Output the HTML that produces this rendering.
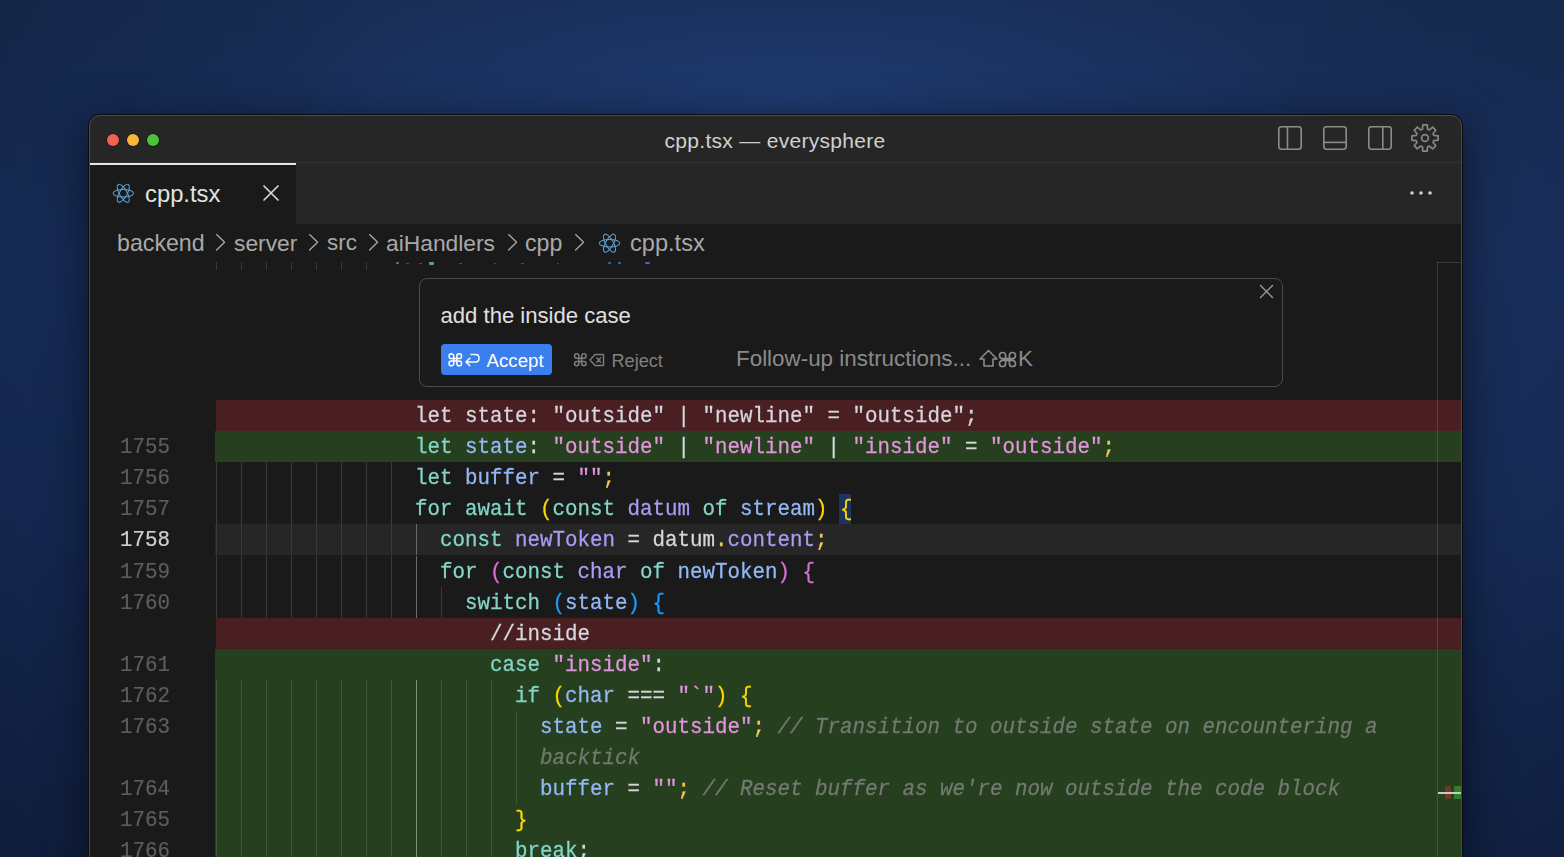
<!DOCTYPE html>
<html><head><meta charset="utf-8">
<style>
*{margin:0;padding:0;box-sizing:border-box}
html,body{width:1564px;height:857px;overflow:hidden}
body{position:relative;font-family:"Liberation Sans",sans-serif;background:#152a52;}
#bg{position:absolute;left:0;top:0;width:1564px;height:857px;
background:
 radial-gradient(ellipse 520px 160px at 790px 95px, rgba(34,66,128,0.55) 0%, rgba(34,66,128,0) 100%),
 linear-gradient(to right, rgba(5,10,25,0.22) 0%, rgba(5,10,25,0) 25%, rgba(5,10,25,0) 75%, rgba(5,10,25,0.12) 100%),
 linear-gradient(to bottom, #182d55 0%, #1a3262 30%, #182e5c 60%, #122245 100%);}
.a{position:absolute}
#win{position:absolute;left:89px;top:115px;width:1373px;height:800px;border-radius:11px;background:#1a1a1a;overflow:hidden;
 box-shadow:0 0 0 1px #0a0c12, 0 10px 45px rgba(0,0,0,.55)}
#winb{position:absolute;left:89px;top:115px;width:1373px;height:800px;border-radius:11px;border:1px solid #4a4a4a;pointer-events:none}
#title{left:0;top:0;width:1373px;height:48px;background:#262626;border-bottom:1px solid #333}
.tl{position:absolute;top:18.75px;width:12.5px;height:12.5px;border-radius:50%;box-shadow:0 0 0 0.6px rgba(0,0,0,.5)}
#ttext{left:575px;top:13px;font-size:21.7px;color:#d0d0d0;white-space:nowrap}
#tabs{left:0;top:48px;width:1373px;height:61px;background:#262626}
#tab{left:0;top:0;width:206.5px;height:61px;background:#1a1a1a;border-top:2px solid #e6e6e6}
.sans{white-space:nowrap}
.code{font-family:"Liberation Mono",monospace;font-size:20.83px;white-space:pre;line-height:31.1px}
.row{position:absolute;left:126px;width:1247px;height:31.1px}
.rdel{background:#4a1f22;clip-path:inset(0 0 0 1px)}
.radd{background:#263f1f}
.rcur{background:#262626}
.txt{position:absolute;top:1px;-webkit-text-stroke:0.25px currentColor;transform:scaleY(1.09);transform-origin:0 21px}
.ln{position:absolute;left:-95px;width:50px;text-align:right;top:1px;transform:scaleY(1.1);transform-origin:0 21px;color:#5d5d5d;-webkit-text-stroke:0.2px currentColor}
.lncur{color:#d0d0d0}
.g{position:absolute;top:0;width:1px;height:31.1px;background:#3a3a3a}
.radd .g{background:#3f5a37}
.gb{background:#6a6a6a}
.radd .gb{background:#7d9474}
.k{color:#83d6c5}.v{color:#94b8f5}.p{color:#aa9bf5}.s{color:#e394dc}.w{color:#d6d6dd}.y{color:#f0c85a}
.b1{color:#ffd700}.b2{color:#da70d6}.b3{color:#179fff}.c{color:#737a70;font-style:italic}
.bm{background:#1f3a5c}
.crumb{position:absolute;top:112px;font-size:23.8px;color:#a8a8a8;white-space:nowrap}
.pt{position:absolute;white-space:nowrap;line-height:1;font-family:"Liberation Sans",sans-serif}
#ov{position:absolute;left:0;top:0}

</style></head><body>
<div id="bg"></div>
<div id="win">
 <div id="title" class="a"><div class="tl" style="left:17.75px;background:#ef6352"></div><div class="tl" style="left:37.75px;background:#f5b83a"></div><div class="tl" style="left:57.75px;background:#4ec23d"></div></div>
 <div id="tabs" class="a"><div id="tab" class="a"></div></div>
 <div class="a" style="left:126.6px;top:147px;width:1px;height:8px;background:#3a3a3a"></div>
 <div class="a" style="left:151.6px;top:147px;width:1px;height:8px;background:#3a3a3a"></div>
 <div class="a" style="left:176.6px;top:147px;width:1px;height:8px;background:#3a3a3a"></div>
 <div class="a" style="left:201.6px;top:147px;width:1px;height:8px;background:#3a3a3a"></div>
 <div class="a" style="left:226.6px;top:147px;width:1px;height:8px;background:#3a3a3a"></div>
 <div class="a" style="left:251.6px;top:147px;width:1px;height:8px;background:#3a3a3a"></div>
 <div class="a" style="left:276.6px;top:147px;width:1px;height:8px;background:#3a3a3a"></div>
<div class="row rdel" style="top:285.00px">
<div class="txt code" style="left:200.0px"><span class="w">let state: "outside" | "newline" = "outside";</span></div>
</div>
<div class="row radd" style="top:316.10px">
<div class="ln code">1755</div>
<div class="txt code" style="left:200.0px"><span class="k">let</span> <span class="v">state</span><span class="w">: </span><span class="s">"outside"</span><span class="w"> | </span><span class="s">"newline"</span><span class="w"> | </span><span class="s">"inside"</span><span class="w"> = </span><span class="s">"outside"</span><span class="y">;</span></div>
</div>
<div class="row rn" style="top:347.20px">
<div class="g" style="left:0.6px"></div>
<div class="g" style="left:25.6px"></div>
<div class="g" style="left:50.6px"></div>
<div class="g" style="left:75.6px"></div>
<div class="g" style="left:100.6px"></div>
<div class="g" style="left:125.6px"></div>
<div class="g" style="left:150.6px"></div>
<div class="g" style="left:175.6px"></div>
<div class="ln code">1756</div>
<div class="txt code" style="left:200.0px"><span class="k">let</span> <span class="v">buffer</span><span class="w"> = </span><span class="s">""</span><span class="y">;</span></div>
</div>
<div class="row rn" style="top:378.30px">
<div class="g" style="left:0.6px"></div>
<div class="g" style="left:25.6px"></div>
<div class="g" style="left:50.6px"></div>
<div class="g" style="left:75.6px"></div>
<div class="g" style="left:100.6px"></div>
<div class="g" style="left:125.6px"></div>
<div class="g" style="left:150.6px"></div>
<div class="g" style="left:175.6px"></div>
<div class="ln code">1757</div>
<div class="a" style="left:624px;top:0.7px;width:11.8px;height:30.3px;background:#1d3360"></div>
<div class="txt code" style="left:200.0px"><span class="k">for</span> <span class="k">await</span> <span class="b1">(</span><span class="k">const</span> <span class="p">datum</span> <span class="k">of</span> <span class="v">stream</span><span class="b1">)</span> <span class="b1">{</span></div>
</div>
<div class="row rcur" style="top:409.40px">
<div class="g" style="left:0.6px"></div>
<div class="g" style="left:25.6px"></div>
<div class="g" style="left:50.6px"></div>
<div class="g" style="left:75.6px"></div>
<div class="g" style="left:100.6px"></div>
<div class="g" style="left:125.6px"></div>
<div class="g" style="left:150.6px"></div>
<div class="g" style="left:175.6px"></div>
<div class="g gb" style="left:200.6px"></div>
<div class="ln code lncur">1758</div>
<div class="txt code" style="left:225.0px"><span class="k">const</span> <span class="p">newToken</span><span class="w"> = datum</span><span class="y">.</span><span class="p">content</span><span class="y">;</span></div>
</div>
<div class="row rn" style="top:440.50px">
<div class="g" style="left:0.6px"></div>
<div class="g" style="left:25.6px"></div>
<div class="g" style="left:50.6px"></div>
<div class="g" style="left:75.6px"></div>
<div class="g" style="left:100.6px"></div>
<div class="g" style="left:125.6px"></div>
<div class="g" style="left:150.6px"></div>
<div class="g" style="left:175.6px"></div>
<div class="g gb" style="left:200.6px"></div>
<div class="ln code">1759</div>
<div class="txt code" style="left:225.0px"><span class="k">for</span> <span class="b2">(</span><span class="k">const</span> <span class="p">char</span> <span class="k">of</span> <span class="v">newToken</span><span class="b2">)</span> <span class="b2">{</span></div>
</div>
<div class="row rn" style="top:471.60px">
<div class="g" style="left:0.6px"></div>
<div class="g" style="left:25.6px"></div>
<div class="g" style="left:50.6px"></div>
<div class="g" style="left:75.6px"></div>
<div class="g" style="left:100.6px"></div>
<div class="g" style="left:125.6px"></div>
<div class="g" style="left:150.6px"></div>
<div class="g" style="left:175.6px"></div>
<div class="g gb" style="left:200.6px"></div>
<div class="g" style="left:225.6px"></div>
<div class="ln code">1760</div>
<div class="txt code" style="left:250.0px"><span class="k">switch</span> <span class="b3">(</span><span class="v">state</span><span class="b3">)</span> <span class="b3">{</span></div>
</div>
<div class="row rdel" style="top:502.70px">
<div class="txt code" style="left:275.0px"><span class="w">//inside</span></div>
</div>
<div class="row radd" style="top:533.80px">
<div class="ln code">1761</div>
<div class="txt code" style="left:275.0px"><span class="k">case</span> <span class="s">"inside"</span><span class="w">:</span></div>
</div>
<div class="row radd" style="top:564.90px">
<div class="g" style="left:0.6px"></div>
<div class="g" style="left:25.6px"></div>
<div class="g" style="left:50.6px"></div>
<div class="g" style="left:75.6px"></div>
<div class="g" style="left:100.6px"></div>
<div class="g" style="left:125.6px"></div>
<div class="g" style="left:150.6px"></div>
<div class="g" style="left:175.6px"></div>
<div class="g gb" style="left:200.6px"></div>
<div class="g" style="left:225.6px"></div>
<div class="g" style="left:250.6px"></div>
<div class="g" style="left:275.6px"></div>
<div class="ln code">1762</div>
<div class="txt code" style="left:300.0px"><span class="k">if</span> <span class="b1">(</span><span class="v">char</span><span class="w"> === </span><span class="s">"`"</span><span class="b1">)</span> <span class="b1">{</span></div>
</div>
<div class="row radd" style="top:596.00px">
<div class="g" style="left:0.6px"></div>
<div class="g" style="left:25.6px"></div>
<div class="g" style="left:50.6px"></div>
<div class="g" style="left:75.6px"></div>
<div class="g" style="left:100.6px"></div>
<div class="g" style="left:125.6px"></div>
<div class="g" style="left:150.6px"></div>
<div class="g" style="left:175.6px"></div>
<div class="g gb" style="left:200.6px"></div>
<div class="g" style="left:225.6px"></div>
<div class="g" style="left:250.6px"></div>
<div class="g" style="left:275.6px"></div>
<div class="g" style="left:300.6px"></div>
<div class="ln code">1763</div>
<div class="txt code" style="left:325.0px"><span class="v">state</span><span class="w"> = </span><span class="s">"outside"</span><span class="y">;</span> <span class="c">// Transition to outside state on encountering a</span></div>
</div>
<div class="row radd" style="top:627.10px">
<div class="g" style="left:0.6px"></div>
<div class="g" style="left:25.6px"></div>
<div class="g" style="left:50.6px"></div>
<div class="g" style="left:75.6px"></div>
<div class="g" style="left:100.6px"></div>
<div class="g" style="left:125.6px"></div>
<div class="g" style="left:150.6px"></div>
<div class="g" style="left:175.6px"></div>
<div class="g gb" style="left:200.6px"></div>
<div class="g" style="left:225.6px"></div>
<div class="g" style="left:250.6px"></div>
<div class="g" style="left:275.6px"></div>
<div class="g" style="left:300.6px"></div>
<div class="txt code" style="left:325.0px"><span class="c">backtick</span></div>
</div>
<div class="row radd" style="top:658.20px">
<div class="g" style="left:0.6px"></div>
<div class="g" style="left:25.6px"></div>
<div class="g" style="left:50.6px"></div>
<div class="g" style="left:75.6px"></div>
<div class="g" style="left:100.6px"></div>
<div class="g" style="left:125.6px"></div>
<div class="g" style="left:150.6px"></div>
<div class="g" style="left:175.6px"></div>
<div class="g gb" style="left:200.6px"></div>
<div class="g" style="left:225.6px"></div>
<div class="g" style="left:250.6px"></div>
<div class="g" style="left:275.6px"></div>
<div class="g" style="left:300.6px"></div>
<div class="ln code">1764</div>
<div class="txt code" style="left:325.0px"><span class="v">buffer</span><span class="w"> = </span><span class="s">""</span><span class="y">;</span> <span class="c">// Reset buffer as we're now outside the code block</span></div>
</div>
<div class="row radd" style="top:689.30px">
<div class="g" style="left:0.6px"></div>
<div class="g" style="left:25.6px"></div>
<div class="g" style="left:50.6px"></div>
<div class="g" style="left:75.6px"></div>
<div class="g" style="left:100.6px"></div>
<div class="g" style="left:125.6px"></div>
<div class="g" style="left:150.6px"></div>
<div class="g" style="left:175.6px"></div>
<div class="g gb" style="left:200.6px"></div>
<div class="g" style="left:225.6px"></div>
<div class="g" style="left:250.6px"></div>
<div class="g" style="left:275.6px"></div>
<div class="ln code">1765</div>
<div class="txt code" style="left:300.0px"><span class="b1">}</span></div>
</div>
<div class="row radd" style="top:720.40px">
<div class="g" style="left:0.6px"></div>
<div class="g" style="left:25.6px"></div>
<div class="g" style="left:50.6px"></div>
<div class="g" style="left:75.6px"></div>
<div class="g" style="left:100.6px"></div>
<div class="g" style="left:125.6px"></div>
<div class="g" style="left:150.6px"></div>
<div class="g" style="left:175.6px"></div>
<div class="g gb" style="left:200.6px"></div>
<div class="g" style="left:225.6px"></div>
<div class="g" style="left:250.6px"></div>
<div class="g" style="left:275.6px"></div>
<div class="ln code">1766</div>
<div class="txt code" style="left:300.0px"><span class="k">break</span><span class="w">;</span></div>
</div>
 <div class="a" style="left:307px;top:147px;width:2.5px;height:2px;background:#c678dd;border-radius:1px;opacity:.7"></div>
 <div class="a" style="left:317px;top:147.5px;width:3px;height:1px;background:#666;border-radius:1px;opacity:.7"></div>
 <div class="a" style="left:330px;top:147.5px;width:3px;height:1px;background:#666;border-radius:1px;opacity:.7"></div>
 <div class="a" style="left:340px;top:147px;width:5px;height:3px;background:#83d6c5;border-radius:1px;opacity:.7"></div>
 <div class="a" style="left:370px;top:147.5px;width:3px;height:1px;background:#666;border-radius:1px;opacity:.7"></div>
 <div class="a" style="left:405px;top:147.5px;width:2px;height:1px;background:#666;border-radius:1px;opacity:.7"></div>
 <div class="a" style="left:432px;top:147.5px;width:3px;height:1px;background:#666;border-radius:1px;opacity:.7"></div>
 <div class="a" style="left:468px;top:147.5px;width:2px;height:1px;background:#666;border-radius:1px;opacity:.7"></div>
 <div class="a" style="left:519px;top:147px;width:2.5px;height:1.5px;background:#4a8ee8;border-radius:1px;opacity:.7"></div>
 <div class="a" style="left:529px;top:147px;width:2.5px;height:1.5px;background:#4a8ee8;border-radius:1px;opacity:.7"></div>
 <div class="a" style="left:556px;top:147px;width:4.5px;height:2px;background:#4a8ee8;border-radius:1px;opacity:.7"></div>
 <div class="a" style="left:1348px;top:147px;width:1px;height:700px;background:rgba(255,255,255,.13)"></div>
 <div class="a" style="left:1348px;top:147px;width:25px;height:1px;background:rgba(255,255,255,.13)"></div>
 <div class="a" style="left:1356px;top:671px;width:6px;height:13px;background:#6d3a2a;filter:blur(.6px)"></div>
 <div class="a" style="left:1365px;top:671px;width:8px;height:13px;background:#2f7f2a;filter:blur(.6px)"></div>
 <div class="a" style="left:1349px;top:676.5px;width:24px;height:2.5px;background:#c8c8c8"></div>
 <div class="a" style="left:330px;top:163px;width:864px;height:109px;border:1px solid #4a4a4a;border-radius:8px;background:#1a1a1a"></div>
 <div class="a" style="left:352px;top:229px;width:111px;height:31px;border-radius:4px;background:#3b7eed"></div>
</div>
<div id="winb"></div>
<div class="pt" style="left:664.5px;top:129.8px;font-size:21px;color:#d0d0d0;letter-spacing:0.3px">cpp.tsx — everysphere</div>
<div class="pt" style="left:145px;top:181.5px;font-size:23.8px;color:#e2e2e2;">cpp.tsx</div>
<div class="pt" style="left:117px;top:231.6px;font-size:23.2px;color:#a9a9a9;">backend</div>
<div class="pt" style="left:234px;top:231.6px;font-size:22.8px;color:#a9a9a9;">server</div>
<div class="pt" style="left:327px;top:231.6px;font-size:22.4px;color:#a9a9a9;">src</div>
<div class="pt" style="left:386px;top:231.6px;font-size:22.8px;color:#a9a9a9;">aiHandlers</div>
<div class="pt" style="left:525px;top:231.6px;font-size:23.2px;color:#a9a9a9;">cpp</div>
<div class="pt" style="left:630px;top:231.6px;font-size:23.6px;color:#a9a9a9;">cpp.tsx</div>
<div class="pt" style="left:440.5px;top:304.5px;font-size:22.1px;color:#e0e0e0;">add the inside case</div>
<div class="pt" style="left:486.5px;top:352px;font-size:18.7px;color:#ffffff;">Accept</div>
<div class="pt" style="left:611.5px;top:352px;font-size:18.1px;color:#808080;">Reject</div>
<div class="pt" style="left:736px;top:348px;font-size:22.4px;color:#8a8a8a;">Follow-up instructions...</div>
<div class="pt" style="left:1018px;top:348px;font-size:22.4px;color:#8a8a8a;">K</div>
<svg id="ov" width="1564" height="857" viewBox="0 0 1564 857"><ellipse cx="123.3" cy="193.3" rx="10.2" ry="3.8" transform="rotate(0 123.3 193.3)" fill="none" stroke="#5f9dcc" stroke-width="1.05"/><ellipse cx="123.3" cy="193.3" rx="10.2" ry="3.8" transform="rotate(60 123.3 193.3)" fill="none" stroke="#5f9dcc" stroke-width="1.05"/><ellipse cx="123.3" cy="193.3" rx="10.2" ry="3.8" transform="rotate(120 123.3 193.3)" fill="none" stroke="#5f9dcc" stroke-width="1.05"/><ellipse cx="609.5" cy="243.2" rx="10.2" ry="3.8" transform="rotate(0 609.5 243.2)" fill="none" stroke="#5f9dcc" stroke-width="1.05"/><ellipse cx="609.5" cy="243.2" rx="10.2" ry="3.8" transform="rotate(60 609.5 243.2)" fill="none" stroke="#5f9dcc" stroke-width="1.05"/><ellipse cx="609.5" cy="243.2" rx="10.2" ry="3.8" transform="rotate(120 609.5 243.2)" fill="none" stroke="#5f9dcc" stroke-width="1.05"/><path d="M264,186 L278,200 M278,186 L264,200" stroke="#d6d6d6" stroke-width="1.7" stroke-linecap="round"/><path d="M1260.5,285.5 L1272.5,297.5 M1272.5,285.5 L1260.5,297.5" stroke="#9a9a9a" stroke-width="1.4" stroke-linecap="round"/><path d="M216.6,234.6 L224.6,242.3 L216.6,250" fill="none" stroke="#a6a6a6" stroke-width="1.35" stroke-linecap="round" stroke-linejoin="round"/><path d="M309.6,234.6 L317.6,242.3 L309.6,250" fill="none" stroke="#a6a6a6" stroke-width="1.35" stroke-linecap="round" stroke-linejoin="round"/><path d="M369.6,234.6 L377.6,242.3 L369.6,250" fill="none" stroke="#a6a6a6" stroke-width="1.35" stroke-linecap="round" stroke-linejoin="round"/><path d="M508.6,234.6 L516.6,242.3 L508.6,250" fill="none" stroke="#a6a6a6" stroke-width="1.35" stroke-linecap="round" stroke-linejoin="round"/><path d="M575.6,234.6 L583.6,242.3 L575.6,250" fill="none" stroke="#a6a6a6" stroke-width="1.35" stroke-linecap="round" stroke-linejoin="round"/><circle cx="1412" cy="193" r="1.8" fill="#d0d0d0"/><circle cx="1421" cy="193" r="1.8" fill="#d0d0d0"/><circle cx="1430" cy="193" r="1.8" fill="#d0d0d0"/><rect x="1278.8" y="126.8" width="22.4" height="22.4" rx="2.6" fill="none" stroke="#8c8c8c" stroke-width="1.6"/><path d="M1287.5,127 V149" stroke="#8c8c8c" stroke-width="1.6"/><rect x="1323.8" y="126.8" width="22.4" height="22.4" rx="2.6" fill="none" stroke="#8c8c8c" stroke-width="1.6"/><path d="M1324,142.4 H1346" stroke="#8c8c8c" stroke-width="1.6"/><rect x="1368.8" y="126.8" width="22.4" height="22.4" rx="2.6" fill="none" stroke="#8c8c8c" stroke-width="1.6"/><path d="M1382.8,127 V149" stroke="#8c8c8c" stroke-width="1.6"/><path d="M1422.46,129.16 L1422.80,124.88 L1427.20,124.88 L1427.54,129.16 L1429.46,129.95 L1432.72,127.17 L1435.83,130.28 L1433.05,133.54 L1433.84,135.46 L1438.12,135.80 L1438.12,140.20 L1433.84,140.54 L1433.05,142.46 L1435.83,145.72 L1432.72,148.83 L1429.46,146.05 L1427.54,146.84 L1427.20,151.12 L1422.80,151.12 L1422.46,146.84 L1420.54,146.05 L1417.28,148.83 L1414.17,145.72 L1416.95,142.46 L1416.16,140.54 L1411.88,140.20 L1411.88,135.80 L1416.16,135.46 L1416.95,133.54 L1414.17,130.28 L1417.28,127.17 L1420.54,129.95 Z" fill="none" stroke="#878787" stroke-width="1.7" stroke-linejoin="round"/><circle cx="1425" cy="138" r="3.4" fill="none" stroke="#878787" stroke-width="1.7"/><path d="M453.788,358.588 H456.812 V361.012 H453.788 Z M453.788,358.588 V356.194 A2.394,2.394 0 1 0 451.394,358.588 Z M456.812,358.588 H459.206 A2.394,2.394 0 1 0 456.812,356.194 Z M456.812,361.012 V363.406 A2.394,2.394 0 1 0 459.206,361.012 Z M453.788,361.012 H451.394 A2.394,2.394 0 1 0 453.788,363.406 Z" fill="none" stroke="#ffffff" stroke-width="1.45"/><path d="M471,354.6 H475.5 Q479,354.6 479,358.1 V358.6 Q479,362 475.5,362 H466 M469.8,358.3 L466,362 L469.8,365.7" fill="none" stroke="#ffffff" stroke-width="1.5" stroke-linecap="round" stroke-linejoin="round"/><path d="M578.908,358.208 H581.692 V361.392 H578.908 Z M578.908,358.208 V356.004 A2.2039999999999997,2.2039999999999997 0 1 0 576.704,358.208 Z M581.692,358.208 H583.8960000000001 A2.2039999999999997,2.2039999999999997 0 1 0 581.692,356.004 Z M581.692,361.392 V363.596 A2.2039999999999997,2.2039999999999997 0 1 0 583.8960000000001,361.392 Z M578.908,361.392 H576.704 A2.2039999999999997,2.2039999999999997 0 1 0 578.908,363.596 Z" fill="none" stroke="#7d7d7d" stroke-width="1.5"/><path d="M595,354.5 H603.5 V365.5 H595 L590,360 Z M596.5,357.5 L601,362.5 M601,357.5 L596.5,362.5" fill="none" stroke="#7d7d7d" stroke-width="1.4" stroke-linejoin="round"/><path d="M988.5,350.5 L980,359 H984 V366 H993 V359 H997 Z" fill="none" stroke="#8a8a8a" stroke-width="1.6" stroke-linejoin="round"/><path d="M1005.58,358.58 H1009.42 V360.42 H1005.58 Z M1005.58,358.58 V355.54 A3.04,3.04 0 1 0 1002.54,358.58 Z M1009.42,358.58 H1012.46 A3.04,3.04 0 1 0 1009.42,355.54 Z M1009.42,360.42 V363.46 A3.04,3.04 0 1 0 1012.46,360.42 Z M1005.58,360.42 H1002.54 A3.04,3.04 0 1 0 1005.58,363.46 Z" fill="none" stroke="#8a8a8a" stroke-width="1.7"/></svg>
</body></html>
